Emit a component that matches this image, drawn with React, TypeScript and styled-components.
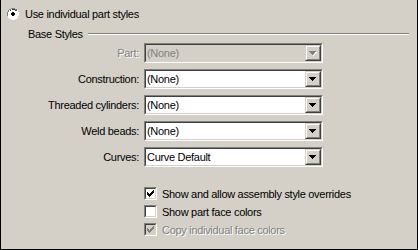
import React from "react";
import styled, { createGlobalStyle, css } from "styled-components";

const Global = createGlobalStyle`
  html, body { margin: 0; padding: 0; background: #d4d0c8; }
  * { box-sizing: border-box; }
`;

const Panel = styled.div`
  width: 418px;
  height: 250px;
  background: #d4d0c8;
  border: 1px solid #000;
  border-top: none;
  font-family: "Liberation Sans", Arial, sans-serif;
  font-size: 11px;
  letter-spacing: -0.3px;
  color: #000;
  padding: 8px 0 0 6px;
  display: flex;
  flex-direction: column;
`;

const RadioRow = styled.label`
  display: flex;
  align-items: center;
  height: 12px;
  gap: 6px;
`;

const GroupHeader = styled.div`
  display: flex;
  align-items: center;
  margin: 8px 8px 0 21px;
  height: 12px;
  gap: 5px;
`;

const Etched = styled.div`
  flex: 1;
  height: 2px;
  border-top: 1px solid #808080;
  border-bottom: 1px solid #fff;
`;

const Form = styled.div`
  display: grid;
  grid-template-columns: 132px 179px;
  column-gap: 5px;
  row-gap: 6px;
  margin-top: 3px;
  align-items: center;
`;

const Label = styled.span<{ $disabled?: boolean }>`
  text-align: right;
  white-space: nowrap;
  color: ${(p) => (p.$disabled ? "#808080" : "#000")};
  ${(p) => p.$disabled && css`text-shadow: 1px 1px 0 #fff;`}
`;

const Combo = styled.div`
  height: 20px;
  display: flex;
  align-items: stretch;
  border-top: 1px solid #808080;
  border-left: 1px solid #808080;
  border-right: 1px solid #fff;
  border-bottom: 1px solid #fff;
`;

const ComboInner = styled.div<{ $disabled?: boolean }>`
  flex: 1;
  display: flex;
  align-items: stretch;
  border-top: 1px solid #404040;
  border-left: 1px solid #404040;
  border-right: 1px solid #d4d0c8;
  border-bottom: 1px solid #d4d0c8;
  background: ${(p) => (p.$disabled ? "#d4d0c8" : "#fff")};
`;

const ComboText = styled.span<{ $disabled?: boolean }>`
  flex: 1;
  display: flex;
  align-items: center;
  padding-left: 1px;
  color: ${(p) => (p.$disabled ? "#808080" : "#000")};
  white-space: nowrap;
  overflow: hidden;
`;

const DropButton = styled.div`
  width: 16px;
  background: #d4d0c8;
  border-top: 1px solid #d4d0c8;
  border-left: 1px solid #d4d0c8;
  border-right: 1px solid #404040;
  border-bottom: 1px solid #404040;
  display: flex;
`;

const DropButtonInner = styled.div`
  flex: 1;
  border-top: 1px solid #fff;
  border-left: 1px solid #fff;
  border-right: 1px solid #808080;
  border-bottom: 1px solid #808080;
  display: flex;
  align-items: center;
  justify-content: center;
`;

const Checks = styled.div`
  display: flex;
  flex-direction: column;
  gap: 5px;
  margin: 20px 0 0 137px;
`;

const CheckRow = styled.label<{ $disabled?: boolean }>`
  display: flex;
  align-items: center;
  height: 13px;
  gap: 5px;
  color: ${(p) => (p.$disabled ? "#808080" : "#000")};
  ${(p) => p.$disabled && css`text-shadow: 1px 1px 0 #fff;`}
`;

const Box = styled.span`
  width: 13px;
  height: 13px;
  flex: none;
  border-top: 1px solid #808080;
  border-left: 1px solid #808080;
  border-right: 1px solid #fff;
  border-bottom: 1px solid #fff;
  display: flex;
`;

const BoxInner = styled.span<{ $disabled?: boolean }>`
  flex: 1;
  border-top: 1px solid #404040;
  border-left: 1px solid #404040;
  border-right: 1px solid #d4d0c8;
  border-bottom: 1px solid #d4d0c8;
  background: ${(p) => (p.$disabled ? "#d4d0c8" : "#fff")};
  display: flex;
  align-items: center;
  justify-content: center;
`;

const Arrow = ({ disabled }: { disabled?: boolean }) => (
  <svg width="8" height="5" viewBox="0 0 8 5" shapeRendering="crispEdges">
    {disabled && <path d="M1 1h7v1h-1v1h-1v1h-1v1h-1v-1h1v-1h1v-1h1z" fill="#fff" />}
    <path d="M0 0h7v1h-1v1h-1v1h-1v1h-1v-1h-1v-1h-1v-1h-1z" fill={disabled ? "#808080" : "#000"} />
  </svg>
);

const Radio = () => (
  <svg width="12" height="12" viewBox="0 0 12 12" shapeRendering="crispEdges">
    <path d="M4 0h4v1h2v1h1v2h1v4h-1v2h-1v1h-2v1h-4v-1h-2v-1h-1v-2h-1v-4h1v-2h1v-1h2z" fill="#fff" />
    <path d="M4 0h4v1h2v1h-2v-1h-4v1h-2v2h-1v4h-1v-4h1v-2h1v-1h2z" fill="#808080" />
    <path d="M4 1h4v1h2v1h-2v-1h-4v1h-2v1h-1v4h-0v-4h1v-1h1v-1h2z" fill="#404040" />
    <path d="M4 2h4v1h1v1h1v4h-1v1h-1v1h-4v-1h-1v-1h-1v-4h1v-1h1z" fill="#fff" />
    <path d="M5 4h2v1h1v2h-1v1h-2v-1h-1v-2h1z" fill="#000" />
  </svg>
);

const Check = ({ disabled }: { disabled?: boolean }) => (
  <svg width="7" height="7" viewBox="0 0 7 7" shapeRendering="crispEdges">
    <path d="M6 0h1v3h-1v1h-1v1h-1v1h-1v1h-1v-1h-1v-1h-1v-1h-1v-3h1v1h1v1h1v1h1v-1h1v-1h1v-1h1z" fill={disabled ? "#808080" : "#000"} />
  </svg>
);

type Row = { label: string; value: string; disabled?: boolean };

const rows: Row[] = [
  { label: "Part:", value: "(None)", disabled: true },
  { label: "Construction:", value: "(None)" },
  { label: "Threaded cylinders:", value: "(None)" },
  { label: "Weld beads:", value: "(None)" },
  { label: "Curves:", value: "Curve Default" },
];

const checks = [
  { label: "Show and allow assembly style overrides", checked: true },
  { label: "Show part face colors", checked: false },
  { label: "Copy individual face colors", checked: true, disabled: true },
];

export default function App() {
  return (
    <>
      <Global />
      <Panel>
        <RadioRow>
          <Radio />
          <span>Use individual part styles</span>
        </RadioRow>
        <GroupHeader>
          <span>Base Styles</span>
          <Etched />
        </GroupHeader>
        <Form>
          {rows.map((r) => (
            <React.Fragment key={r.label}>
              <Label $disabled={r.disabled}>{r.label}</Label>
              <Combo>
                <ComboInner $disabled={r.disabled}>
                  <ComboText $disabled={r.disabled}>{r.value}</ComboText>
                  <DropButton>
                    <DropButtonInner>
                      <Arrow disabled={r.disabled} />
                    </DropButtonInner>
                  </DropButton>
                </ComboInner>
              </Combo>
            </React.Fragment>
          ))}
        </Form>
        <Checks>
          {checks.map((c) => (
            <CheckRow key={c.label} $disabled={c.disabled}>
              <Box>
                <BoxInner $disabled={c.disabled}>
                  {c.checked && <Check disabled={c.disabled} />}
                </BoxInner>
              </Box>
              <span>{c.label}</span>
            </CheckRow>
          ))}
        </Checks>
      </Panel>
    </>
  );
}
